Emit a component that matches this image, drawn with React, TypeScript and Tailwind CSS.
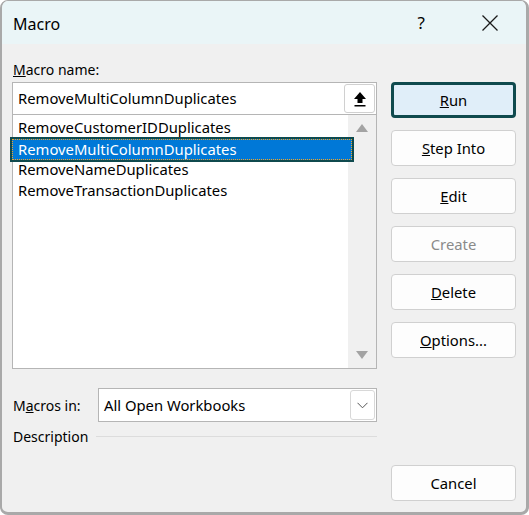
import React from "react";

const font = { fontFamily: '"Noto Sans", "Open Sans", sans-serif' };

function Btn({ children, primary, disabled, className = "" }: { children: React.ReactNode; primary?: boolean; disabled?: boolean; className?: string }) {
  return (
    <div
      className={
        "flex h-[36px] w-[125px] items-center justify-center rounded-[4px] text-[14.8px] " +
        (primary
          ? "border-[3px] border-[#0f4a4e] bg-[#e0eef9] text-black"
          : "border border-[#d0d0d0] bg-[#fdfdfd] " + (disabled ? "text-[#8a8a8a]" : "text-black")) +
        " " +
        className
      }
    >
      {children}
    </div>
  );
}

export default function App() {
  return (
    <div className="h-[515px] w-[529px] bg-white" style={font}>
      <div className="flex h-[515px] w-[529px] flex-col overflow-hidden rounded-[8px] border-t border-l-[2px] border-r-[3px] border-b-[3px] border-[#a9a9a9] bg-[#f0f0f0]">
        {/* title bar */}
        <div className="flex h-[43px] shrink-0 items-center bg-[#eaf5f7] pl-[11px] text-[16px] text-black">
          <span className="mt-[2px]">Macro</span>
          <span className="ml-auto mr-[56px] text-[17px]">?</span>
          <svg width="18" height="18" viewBox="0 0 18 18" className="mr-[27px]">
            <path d="M1.5 1.5 L16.5 16.5 M16.5 1.5 L1.5 16.5" stroke="#1a1a1a" strokeWidth="1.3" />
          </svg>
        </div>
        {/* body */}
        <div className="flex flex-1 pl-[10px]">
          {/* left */}
          <div className="flex w-[365px] flex-col">
            <div className="mt-[14px] h-[24px] pl-[1px] text-[14px] leading-[24px] text-black">
              <span className="underline">M</span>acro name:
            </div>
            <div className="flex h-[33px] items-center border border-[#b5b5b5] bg-white pl-[5px] text-[14.8px] text-black">
              <span>RemoveMultiColumnDuplicates</span>
              <div className="ml-auto mr-[1px] flex h-[29px] w-[31px] items-center justify-center rounded-[3px] border border-[#d0d0d0] bg-white">
                <svg width="14" height="16" viewBox="0 0 14 16">
                  <path d="M7 1 L13 8 H9.5 V12 H4.5 V8 H1 Z" fill="#000" />
                  <rect x="1.5" y="14" width="11" height="1.5" fill="#000" />
                </svg>
              </div>
            </div>
            <div className="relative flex h-[254px] border border-[#b5b5b5] border-t-0 bg-white">
              <div className="flex flex-1 flex-col pt-[2px] text-[14.8px] leading-[21px] text-black">
                <div className="pl-[5px]">RemoveCustomerIDDuplicates</div>
                <div className="relative h-[21px]">
                  <div className="absolute -left-[3px] -top-[1px] h-[25px] w-[344px] border-[2px] border-[#0f4a4e] bg-[#0f4a4e]">
                    <div className="h-full w-full border border-dotted border-[#f5a623] bg-[#0078d7] pl-[5px] leading-[19px] text-white">
                      RemoveMultiColumnDuplicates
                    </div>
                  </div>
                </div>
                <div className="pl-[5px]">RemoveNameDuplicates</div>
                <div className="pl-[5px]">RemoveTransactionDuplicates</div>
              </div>
              <div className="flex w-[28px] flex-col items-center justify-between bg-[#f0f0f0] pb-[9px] pt-[9px]">
                <svg width="12" height="8" viewBox="0 0 12 8"><path d="M6 0 L12 8 H0 Z" fill="#a3a3a3" /></svg>
                <svg width="12" height="8" viewBox="0 0 12 8"><path d="M0 0 H12 L6 8 Z" fill="#a3a3a3" /></svg>
              </div>
            </div>
            <div className="mt-[19px] flex items-center">
              <div className="w-[86px] pl-[1px] text-[14px] text-black">
                M<span className="underline">a</span>cros in:
              </div>
              <div className="flex h-[34px] flex-1 items-center border border-[#b5b5b5] bg-white pl-[5px] text-[14.8px] text-black">
                <span>All Open Workbooks</span>
                <div className="ml-auto mr-[1px] flex h-[30px] w-[25px] items-center justify-center rounded-[3px] border border-[#d8d8d8] bg-white">
                  <svg width="11" height="7" viewBox="0 0 11 7"><path d="M0.5 0.8 L5.5 5.8 L10.5 0.8" stroke="#555" strokeWidth="1" fill="none" /></svg>
                </div>
              </div>
            </div>
            <div className="mt-[4px] flex items-center">
              <span className="pl-[1px] text-[14px] text-black">Description</span>
              <div className="ml-[8px] h-px flex-1 bg-[#dcdcdc]" />
            </div>
          </div>
          {/* right */}
          <div className="ml-[14px] flex flex-col pt-[38px]">
            <Btn primary><span><span className="underline">R</span>un</span></Btn>
            <Btn className="mt-[12px]"><span><span className="underline">S</span>tep Into</span></Btn>
            <Btn className="mt-[12px]"><span><span className="underline">E</span>dit</span></Btn>
            <Btn className="mt-[12px]" disabled>Create</Btn>
            <Btn className="mt-[12px]"><span><span className="underline">D</span>elete</span></Btn>
            <Btn className="mt-[12px]"><span><span className="underline">O</span>ptions...</span></Btn>
            <Btn className="mt-[107px]">Cancel</Btn>
          </div>
        </div>
      </div>
    </div>
  );
}
